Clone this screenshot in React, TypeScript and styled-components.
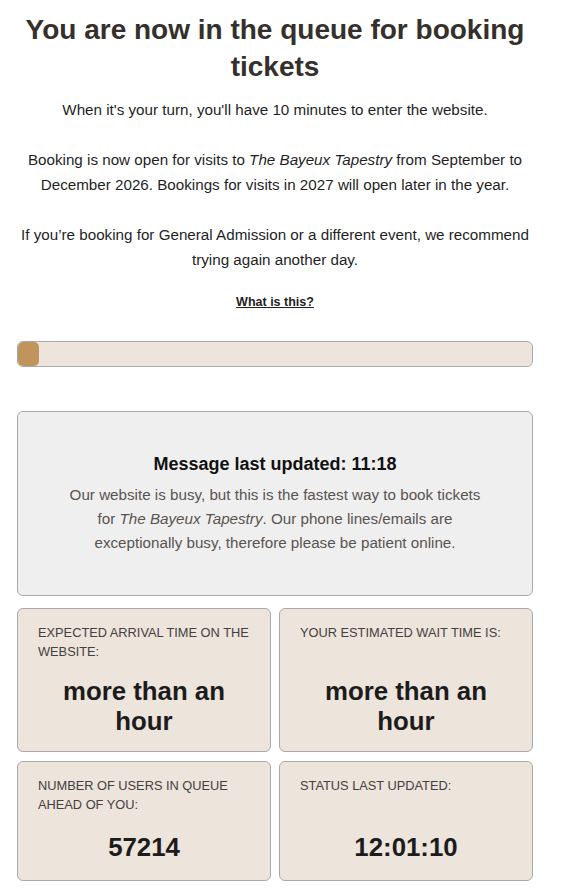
import styled, { createGlobalStyle } from 'styled-components';

const GlobalStyle = createGlobalStyle`
  html, body {
    margin: 0;
    padding: 0;
    background: #ffffff;
  }

  body {
    font-family: 'Liberation Sans', Arial, Helvetica, sans-serif;
    color: #222222;
  }
`;

interface IStatCard {
  label: string;
  value: string;
  big?: boolean;
}

const Page = styled.main`
  width: 516px;
  margin-left: 17px;
  padding-bottom: 40px;
`;

const Title = styled.h1`
  margin: 11px 0 0;
  font-size: 28px;
  line-height: 37px;
  font-weight: 700;
  text-align: center;
  color: #35302c;
`;

const Intro = styled.div`
  margin-top: 12px;
  display: flex;
  flex-direction: column;
  gap: 25px;
  text-align: center;

  > p {
    margin: 0;
    font-size: 15.2px;
    line-height: 25px;
    color: #1f1f1f;
  }
`;

const InfoLink = styled.a`
  display: block;
  margin-top: 23px;
  text-align: center;
  font-size: 12.5px;
  font-weight: 700;
  color: #1f1f1f;
  text-decoration: underline;
`;

const ProgressTrack = styled.div`
  margin-top: 32px;
  height: 26px;
  box-sizing: border-box;
  border: 1px solid #a9a9a9;
  border-radius: 6px;
  background: #ede4dc;
  overflow: hidden;
`;

const ProgressFill = styled.div`
  height: 100%;
  background: #c0955c;
  border-radius: 5px;
`;

const MessageBox = styled.section`
  margin-top: 44px;
  height: 185px;
  box-sizing: border-box;
  border: 1px solid #a9a9a9;
  border-radius: 6px;
  background: #efefef;
  display: flex;
  flex-direction: column;
  align-items: center;
  justify-content: center;
  text-align: center;
  padding: 0 46px;

  > h2 {
    margin: 0 0 7px;
    font-size: 18px;
    line-height: 24px;
    font-weight: 700;
    color: #111111;
  }

  > p {
    margin: 0;
    font-size: 15.2px;
    line-height: 24px;
    color: #5a5450;
  }
`;

const StatGrid = styled.div`
  margin-top: 12px;
  display: grid;
  grid-template-columns: 1fr 1fr;
  gap: 9px 8px;
`;

const Card = styled.div`
  border: 1px solid #a9a9a9;
  border-radius: 6px;
  background: #ede4dc;
  padding: 14px 20px 0;
  display: grid;
  grid-template-rows: 38px auto;
`;

const CardLabel = styled.div`
  font-size: 12.8px;
  line-height: 19px;
  text-transform: uppercase;
  color: #444040;
`;

const CardValue = styled.div<{ $big?: boolean }>`
  padding: 15px 0;
  text-align: center;
  font-weight: 700;
  color: #1c1c1c;
  font-size: 25.8px;
  line-height: ${({ $big }) => ($big ? '36px' : '30px')};
`;

const StatCard = ({ label, value, big }: IStatCard) => (
  <Card>
    <CardLabel>{label}</CardLabel>
    <CardValue $big={big}>{value}</CardValue>
  </Card>
);

export default function App() {
  const progress = 4;

  return (
    <>
      <GlobalStyle />
      <Page>
        <Title>You are now in the queue for booking tickets</Title>

        <Intro>
          <p>When it's your turn, you'll have 10 minutes to enter the website.</p>
          <p>
            Booking is now open for visits to <em>The Bayeux Tapestry</em> from September to
            December 2026. Bookings for visits in 2027 will open later in the year.
          </p>
          <p>
            If you’re booking for General Admission or a different event, we recommend trying
            again another day.
          </p>
        </Intro>

        <InfoLink href="#">What is this?</InfoLink>

        <ProgressTrack>
          <ProgressFill style={{ width: `${progress}%` }} />
        </ProgressTrack>

        <MessageBox>
          <h2>Message last updated: 11:18</h2>
          <p>
            Our website is busy, but this is the fastest way to book tickets for{' '}
            <em>The Bayeux Tapestry</em>. Our phone lines/emails are exceptionally busy,
            therefore please be patient online.
          </p>
        </MessageBox>

        <StatGrid>
          <StatCard label="Expected arrival time on the website:" value="more than an hour" />
          <StatCard label="Your estimated wait time is:" value="more than an hour" />
          <StatCard label="Number of users in queue ahead of you:" value="57214" big />
          <StatCard label="Status last updated:" value="12:01:10" big />
        </StatGrid>
      </Page>
    </>
  );
}
